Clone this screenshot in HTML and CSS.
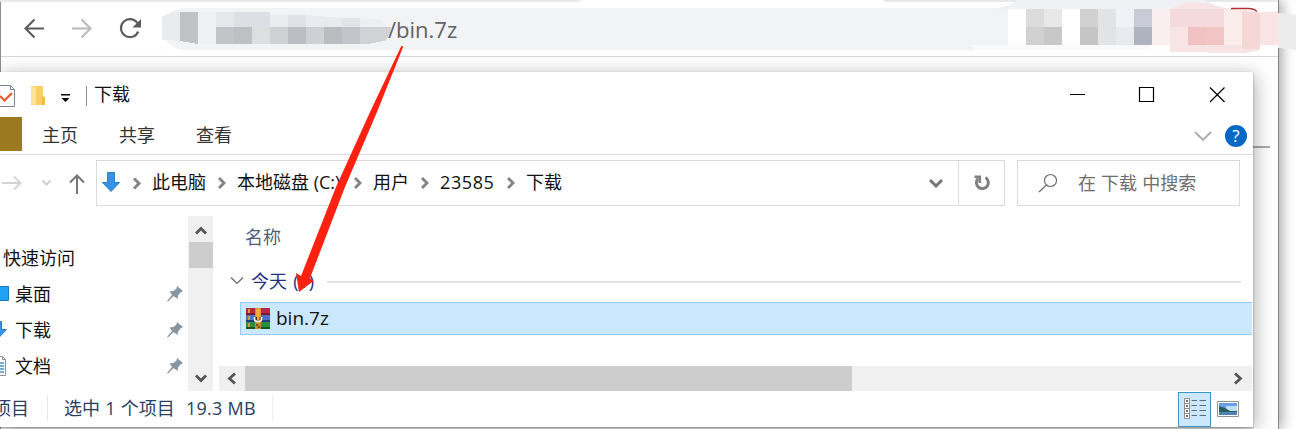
FILE: index.html
```html
<!DOCTYPE html>
<html lang="zh-CN">
<head>
<meta charset="utf-8">
<title>下载</title>
<link rel="stylesheet" href="styles.css">
</head>
<body>
<main class="desktop">
  <section class="browser">
    <div class="toolbar">
      <svg class="nav-icons" width="150" height="56" viewBox="0 0 150 56" fill="none" stroke-width="2.1">
        <path stroke="#5a5c60" d="M44 28.5H26M34.500 19.500L25.500 28.500L34.500 37.500"/>
        <path stroke="#b9babd" d="M72 28.500H90M81.500 19.500L90.500 28.500L81.500 37.500"/>
        <path stroke="#5a5c60" d="M137.500 23.200A9 9 0 1 0 138.300 31.500"/>
        <path fill="#5a5c60" d="M141 19V27.500H132.500Z"/>
      </svg>
      <div class="url"><span class="url-text">/bin.7z</span></div>
    </div>
    <svg class="mosaic" width="1297" height="56" viewBox="0 0 1297 56" shape-rendering="crispEdges">
      <path fill="#e7e8ea" d="M0 0H582L576 2H0ZM882 0H1278V2H886Z"/>
      <path fill="#eff1f4" d="M998 8Q1012 5 1018 0H1205L1215 5L1230 9V12H998Z"/>
      <path fill="#fff" d="M1008 9H1278V50H1152L1008 50Z"/>
      <path fill="#f8fafb" d="M970 45H1150V50H975Z"/>
      <path fill="#f8e4e5" d="M1170 9L1188 2L1206 3L1224 8L1260 12H1278V45H1260V50L1245 53L1170 52Z"/>
      <path fill="#e9ecee" d="M162 17L172 12H180V42L172 40H162Z"/>
      <path fill="#c0c2c4" d="M180 12H198V44L180 41Z"/>
      <path fill="#eef0f1" d="M198 12H216V44H198Z"/>
      <path fill="#e6e7e8" d="M216 12H234V27H216Z"/>
      <path fill="#dcdfe3" d="M234 12H270V27H234Z"/>
      <path fill="#c3c4c7" d="M216 27H234V44H216Z"/>
      <path fill="#bfc0c3" d="M234 27H252V44H234Z"/>
      <path fill="#dcdedf" d="M252 27H270V44H252Z"/>
      <path fill="#eaecee" d="M270 15H288V27H270Z"/>
      <path fill="#cfd1d3" d="M270 27H288V44H270Z"/>
      <path fill="#dee2e6" d="M288 15H306V27H288Z"/>
      <path fill="#babec2" d="M288 27H306V44H288Z"/>
      <path fill="#e8eaed" d="M306 15L342 18V27H306Z"/>
      <path fill="#cfd0d3" d="M306 27H324V44H306Z"/>
      <path fill="#babcc0" d="M324 27H342V44H324Z"/>
      <path fill="#e1e4e7" d="M342 18H360V27H342Z"/>
      <path fill="#c3c5ca" d="M342 27H360V44H342Z"/>
      <path fill="#eceef0" d="M360 18L380 20L388 27H360Z"/>
      <path fill="#d0d2d5" d="M360 27H391L389 36L384 41L368 44H360Z"/>
      <path fill="#dcdcdd" d="M1026 9H1044V27H1026Z"/>
      <path fill="#d1d1d1" d="M1026 27H1044V45H1026Z"/>
      <path fill="#e8e8e8" d="M1044 9H1062V27H1044Z"/>
      <path fill="#c8c8c8" d="M1044 27H1062V45H1044Z"/>
      <path fill="#d1d1d1" d="M1080 9H1098V27H1080Z"/>
      <path fill="#c5c5c5" d="M1080 27H1098V45H1080Z"/>
      <path fill="#e2e3e5" d="M1098 9H1116V45H1098Z"/>
      <path fill="#f0f2f6" d="M1116 9H1134V27H1116Z"/>
      <path fill="#e8eaed" d="M1116 27H1134V45H1116Z"/>
      <path fill="#c9ccd6" d="M1134 9H1152V27H1134Z"/>
      <path fill="#afb3be" d="M1134 27H1152V45H1134Z"/>
      <path fill="#faeff0" d="M1152 9H1170V45H1152Z"/>
      <path fill="#f5dadb" d="M1170 9H1224V27H1170Z"/>
      <path fill="#f2c1c1" d="M1188 27H1206V45H1188Z"/>
      <path fill="#f2c5c5" d="M1206 27H1224V45H1206Z"/>
      <path fill="#fbedec" d="M1224 9L1242 11V45H1224Z"/>
      <path fill="#f5d7d6" d="M1242 11L1260 13V49H1242Z"/>
      <path fill="#f9e4e3" d="M1260 13H1278V44H1260Z"/>
      <path fill="#ececec" d="M1278 13L1296 15V50L1278 48Z"/>
      <path fill="none" stroke="#b53238" stroke-width="1.300" shape-rendering="auto" d="M1231 8.500H1248Q1254 8.500 1257 11.500"/>
    </svg>
    <div class="page-rule"></div>
  </section>

  <section class="explorer">
    <header class="titlebar">
      <svg width="94" height="45" viewBox="0 0 94 45">
        <path fill="#fafbfd" stroke="#7b8492" d="M-4 13.500H10.500L14.500 17.500V34.500H-4M10.500 13.500V17.500H14.500"/>
        <path fill="none" stroke="#e8582c" stroke-width="2.200" d="M0 24L4.500 28.500L12 21"/>
        <path fill="#f7cf65" d="M31 14H43V24L45 26V33H31Z"/>
        <path fill="#ffe49a" d="M31 14L36 16V33.500L31 32Z"/>
        <path fill="#edbd4c" d="M42 25H45V33H42Z"/>
        <path fill="#000" d="M61 22H70V23.500H61ZM61.500 26H69.500L65.500 30Z"/>
        <path stroke="#8c8c8c" d="M86.500 14V34"/>
      </svg>
      <h1 class="title">下载</h1>
      <svg class="window-buttons" width="183" height="45" viewBox="0 0 183 45" fill="none" stroke="#000" stroke-width="1.200">
        <path d="M0 22.500H15M69.500 15.500H83.500V29.500H69.500ZM140 15.500L154.500 30M154.500 15.500L140 30"/>
      </svg>
    </header>

    <nav class="ribbon">
      <span class="file-tab"></span>
      <span class="tab">主页</span>
      <span class="tab">共享</span>
      <span class="tab">查看</span>
      <svg class="ribbon-toggle" width="18" height="12" viewBox="0 0 18 12" fill="none" stroke="#ababab" stroke-width="1.900"><path d="M1 2L9 10L17 2"/></svg>
      <span class="help">?</span>
    </nav>

    <div class="location">
      <svg class="history" width="96" height="46" viewBox="0 0 96 46" fill="none">
        <path stroke="#d4d4d4" stroke-width="2" d="M2 23H20M14 16.500L20.500 23L14 29.500"/>
        <path stroke="#cfcfcf" stroke-width="2" d="M42.500 20.500L46.500 24.500L50.500 20.500"/>
        <path stroke="#777" stroke-width="2" d="M77 34V15M70 22.500L77 15.500L84 22.500"/>
      </svg>
      <div class="address">
        <svg width="55" height="44" viewBox="0 0 55 44"><path fill="#3594e4" stroke="#277dca" d="M10.500 11.500H17.500V21.500H22.500L14 30.500L5.500 21.500H10.500Z"/><path d="M37 17.500L42 22.500L37 27.500" fill="none" stroke="#858585" stroke-width="3"/></svg>
        <span class="crumb pc"><span>此电脑</span><svg class="sep" viewBox="0 0 8 14"><path d="M1 2L6 7L1 12"/></svg></span>
        <span class="crumb disk"><span>本地磁盘 (C:)</span><svg class="sep" viewBox="0 0 8 14"><path d="M1 2L6 7L1 12"/></svg></span>
        <span class="crumb users"><span>用户</span><svg class="sep" viewBox="0 0 8 14"><path d="M1 2L6 7L1 12"/></svg></span>
        <span class="crumb account"><span>23585</span><svg class="sep" viewBox="0 0 8 14"><path d="M1 2L6 7L1 12"/></svg></span>
        <span class="crumb last"><span>下载</span></span>
        <svg class="address-open" width="14" height="10" viewBox="0 0 14 10" fill="none" stroke="#777" stroke-width="3"><path d="M1 2L7 8L13 2"/></svg>
        <span class="refresh"><svg width="18" height="18" viewBox="0 0 18 18" fill="none" stroke="#808080" stroke-width="3"><path d="M12.500 3.500A6 6 0 1 1 5 4.500"/><path stroke-width="2.600" d="M1.500 2.800H6.800V9"/></svg></span>
      </div>
      <div class="search">
        <svg width="20" height="20" viewBox="0 0 20 20" fill="none" stroke="#6d6d6d" stroke-width="1.200"><circle cx="12.500" cy="7.500" r="6"/><path d="M8.500 12L1 19"/></svg>
        <span class="search-text">在 下载 中搜索</span>
      </div>
    </div>

    <div class="body">
      <aside class="sidebar">
        <div class="side-item root">快速访问</div>
        <div class="side-item">
          <svg class="side-icon" viewBox="0 0 10 24"><path fill="#20a2f4" stroke="#167ac1" d="M-2 4.500H8.500V18.500H-2Z"/></svg>桌面
          <svg class="pin" viewBox="0 0 16 16"><path fill="#8795a1" d="M10 0L16 5L13.500 6.500L11 9.500L10.500 13L6.500 10L1 15.500L0 15L5 9L2.500 5.500L6.500 5L9.500 2.500Z"/></svg>
        </div>
        <div class="side-item">
          <svg class="side-icon" viewBox="0 0 10 24"><path fill="#3594e4" stroke="#277dca" d="M-2 3.500H1.500V11.500H6.500L-2 20.500Z"/></svg>下载
          <svg class="pin" viewBox="0 0 16 16"><path fill="#8795a1" d="M10 0L16 5L13.500 6.500L11 9.500L10.500 13L6.500 10L1 15.500L0 15L5 9L2.500 5.500L6.500 5L9.500 2.500Z"/></svg>
        </div>
        <div class="side-item">
          <svg class="side-icon" viewBox="0 0 10 24"><path fill="#fff" stroke="#8a8f96" d="M-2 2.500H2.500L5.500 5.500V21.500H-2M2.500 2.500V5.500H5.500"/><path stroke="#4d93c9" stroke-width="1.500" d="M0 9H4M0 12H4M0 15H4M0 18H4"/></svg>文档
          <svg class="pin" viewBox="0 0 16 16"><path fill="#8795a1" d="M10 0L16 5L13.500 6.500L11 9.500L10.500 13L6.500 10L1 15.500L0 15L5 9L2.500 5.500L6.500 5L9.500 2.500Z"/></svg>
        </div>
      </aside>
      <div class="scroll-y">
        <svg class="scroll-arrow" viewBox="0 0 14 9"><path d="M2 7.500L7 2.500L12 7.500"/></svg>
        <span class="thumb-y"></span>
        <svg class="scroll-arrow end" viewBox="0 0 14 9"><path d="M2 1.500L7 6.500L12 1.500"/></svg>
      </div>
      <div class="files">
        <div class="column-head">名称</div>
        <div class="group">
          <svg width="14" height="10" viewBox="0 0 14 10" fill="none" stroke="#666" stroke-width="1.200"><path d="M1 1.500L7 7.500L13 1.500"/></svg>
          <span class="group-name">今天 (1)</span><span class="group-line"></span>
        </div>
        <div class="file">
          <svg width="24" height="22" viewBox="0 0 24 22">
            <path fill="#b82747" d="M0 1H24V7H0Z"/><path fill="#7c1730" d="M0 6H24V8H0Z"/>
            <path fill="#4c70cf" d="M0 8H24V14H0Z"/><path fill="#263c82" d="M0 13H24V15H0Z"/>
            <path fill="#299044" d="M0 15H24V20H0Z"/><path fill="#14552b" d="M0 20H24V22H0Z"/>
            <path fill="#d99a34" d="M2 2H4V6H2ZM2 9H4V13H2ZM2 16H4V20H2Z"/>
            <path fill="#c98a2e" d="M9 1H15V22H9Z"/>
            <path fill="#f5a83a" d="M10 3Q12 -1 14.500 3V10H10Z"/>
            <path fill="#3d2c26" d="M7.500 10H16.500V15H7.500Z"/>
            <path fill="none" stroke="#f4eee8" stroke-width="1.800" d="M8.500 10V12.500Q8.500 14.500 12 14.500T15.500 12.500V10"/>
            <path fill="#f5a83a" d="M11 8H13.500V13H11Z"/>
            <path fill="#6f522c" d="M10 17H12V19H10ZM12 19H14V21H12Z"/>
          </svg>
          <span>bin.7z</span>
        </div>
        <div class="scroll-x">
          <svg width="26" height="25" viewBox="0 0 26 25"><path d="M16 7.500L10.500 12.500L16 17.500"/></svg>
          <span class="thumb-x"></span>
          <svg class="end" width="26" height="25" viewBox="0 0 26 25"><path d="M9 7.500L14.500 12.500L9 17.500"/></svg>
        </div>
      </div>
    </div>

    <footer class="status">
      <span class="count">项目</span>
      <span class="selected">选中 1 个项目</span>
      <span class="size">19.3 MB</span>
      <span class="view-active">
        <svg width="22" height="22" viewBox="0 0 22 22" fill="none"><path fill="#fff" stroke="#8d8d8d" d="M.5 .5H5.500V20.500H.5ZM.5 5.500H5.500M.5 10.500H5.500M.5 15.500H5.500"/><path stroke="#444" stroke-width="1.500" d="M2 3H4M2 8H4M2 13H4M2 18H4"/><path stroke="#5c6b74" d="M7.500 2.500H13M15.500 2.500H22M7.500 7.500H13M15.500 7.500H22M7.500 12.500H13M15.500 12.500H22M7.500 17.500H13M15.500 17.500H22"/></svg>
      </span>
      <svg class="view-large" width="22" height="16" viewBox="0 0 22 16"><path fill="#fff" stroke="#929292" d="M.5 .5H21.500V15.500H.5Z"/><path fill="#6a9de9" d="M2 2H20V8H2Z"/><path fill="#c0dff5" d="M9 5H20V10H9Z"/><path fill="#285e5a" d="M2 5L8 7L13 10H20V12H2Z"/><path fill="#4e83b6" d="M2 11H20V14H2Z"/></svg>
    </footer>
  </section>

  <svg class="red-arrow" width="120" height="260" viewBox="290 40 120 260"><path fill="#fd2112" d="M401.300 46L403.300 46.500L377 112L345 187L310 278L313.500 281L299 292L296 273L301 276L336 187L370.500 111Z"/></svg>
</main>
</body>
</html>
```
FILE: styles.css
```css
* { box-sizing: border-box; }

body {
  margin: 0;
  font: 18px/26px "Open Sans", "Noto Sans CJK SC", sans-serif;
  color: #111;
}

svg { display: block; flex: none; }

.desktop {
  position: relative;
  width: 1297px;
  height: 429px;
  overflow: hidden;
  background: #fff;
}

.browser {
  position: relative;
  width: 1279px;
  height: 429px;
  border-left: 1px solid #8d8d8d;
  border-right: 1px solid #858585;
  background: #fff;
  box-shadow: 3px 0 12px rgba(0, 0, 0, .35);
}

.toolbar {
  display: flex;
  height: 57px;
  border-bottom: 1px solid #d6d7d8;
}

.nav-icons { margin-left: -1px; }

.url {
  width: 850px;
  height: 42px;
  margin: 8px 0 0 13px;
  padding: 7px 0 0 225px;
  border-radius: 21px 0 0 21px;
  background: #f1f3f4;
  font: 22px/28px "Open Sans", sans-serif;
  color: #5f6368;
}

.mosaic { position: absolute; left: -1px; top: 0; }

.page-rule {
  width: 1269px;
  height: 2px;
  margin-top: 89px;
  background: #aaa;
}

.explorer {
  position: absolute;
  left: 0;
  top: 72px;
  width: 1253px;
  height: 355px;
  background: #fff;
  box-shadow: 0 1px 2px rgba(0, 0, 0, .35), 2px 3px 18px rgba(0, 0, 0, .32);
}

.titlebar { display: flex; height: 45px; }
.title { margin: 9px 0 0; font-size: 18px; line-height: 26px; font-weight: 400; }
.window-buttons { margin-left: auto; }

.ribbon {
  display: flex;
  align-items: center;
  height: 38px;
  padding-right: 6px;
  border-bottom: 1px solid #dadbdc;
  color: #333;
}

.file-tab { width: 22px; height: 34px; margin: 0 20px 3px 0; background: #9c781f; }
.tab { width: 77px; padding-bottom: 2px; }
.ribbon-toggle { margin-left: auto; }

.help {
  width: 22px;
  height: 22px;
  margin-left: 13px;
  border-radius: 50%;
  background: #0868c6;
  color: #fff;
  font-size: 17px;
  line-height: 22px;
  text-align: center;
}

.location { display: flex; height: 61px; padding-top: 5px; }

.address {
  display: flex;
  align-items: center;
  width: 909px;
  height: 46px;
  border: 1px solid #d9d9d9;
}

.crumb { display: flex; align-items: center; justify-content: space-between; padding-right: 11px; white-space: nowrap; }
.crumb span { padding-bottom: 2px; }
.pc { width: 85px; }
.disk { width: 136px; }
.users { width: 67px; }
.account { width: 86px; letter-spacing: .6px; }
.sep { width: 8px; height: 14px; fill: none; stroke: #858585; stroke-width: 3; }
.address-open { margin-left: auto; }

.refresh {
  display: flex;
  align-items: center;
  justify-content: center;
  width: 46px;
  height: 44px;
  margin-left: 15px;
  border-left: 1px solid #d9d9d9;
}

.search {
  display: flex;
  align-items: center;
  gap: 20px;
  width: 223px;
  height: 46px;
  margin-left: 12px;
  padding-left: 20px;
  border: 1px solid #d9d9d9;
  color: #6d6d6d;
}

.search-text { word-spacing: .4px; }

.body { display: flex; height: 175px; }

.sidebar { width: 188px; padding-top: 24px; }
.side-item { display: flex; align-items: center; height: 36px; }
.root { padding-left: 3px; }
.side-icon { width: 10px; height: 24px; margin-right: 5px; }
.pin { width: 16px; height: 16px; margin-left: auto; margin-right: 5px; }

.scroll-y {
  display: flex;
  flex-direction: column;
  align-items: center;
  width: 25px;
  height: 175px;
  padding: 10px 0 8px;
  background: #f0f0f0;
}

.scroll-arrow { width: 14px; height: 9px; fill: none; stroke: #555; stroke-width: 2.8; }
.thumb-y { width: 24px; height: 26px; margin-top: 7px; background: #cdcdcd; }
.end { margin-left: auto; }
.scroll-arrow.end { margin: auto 0 0; }

.files {
  display: flex;
  flex-direction: column;
  width: 1033px;
  margin-left: 6px;
}

.column-head { padding: 8px 0 0 26px; color: #506176; }

.group {
  display: flex;
  align-items: center;
  height: 26px;
  margin-top: 18px;
  padding: 0 11px 0 11px;
}

.group-name { width: 76px; margin-left: 7px; color: #24307d; white-space: nowrap; word-spacing: 1.5px; }
.group-line { flex: 1; height: 2px; background: #e2e2e2; margin-top: 2px; }

.file {
  display: flex;
  align-items: center;
  gap: 6px;
  height: 33px;
  margin: 8px 0 0 21px;
  padding: 0 0 1px 5px;
  border: 1px solid #99cbf3;
  border-right: 0;
  background: #cce8ff;
  font-size: 19px;
}

.scroll-x {
  display: flex;
  height: 25px;
  margin-top: auto;
  background: #f0f0f0;
}

.scroll-x svg { fill: none; stroke: #555; stroke-width: 2.8; }
.thumb-x { width: 607px; background: #cdcdcd; }

.status {
  display: flex;
  align-items: center;
  height: 36px;
  padding-right: 14px;
  color: #28405e;
}

.count { width: 55px; margin-left: -7px; border-right: 1px solid #e8e8e8; }
.selected { width: 122px; margin-left: 16px; white-space: nowrap; word-spacing: .5px; }
.size { width: 87px; border-right: 1px solid #eee; letter-spacing: .25px; }
.count, .selected, .size { margin-bottom: 2px; }

.view-active {
  display: flex;
  align-items: center;
  justify-content: center;
  width: 33px;
  height: 35px;
  margin-left: auto;
  border: 1px solid #3999c4;
  background: #cce8ff;
}

.view-large { margin-left: 6px; }

.red-arrow { position: absolute; left: 290px; top: 40px; }
```
